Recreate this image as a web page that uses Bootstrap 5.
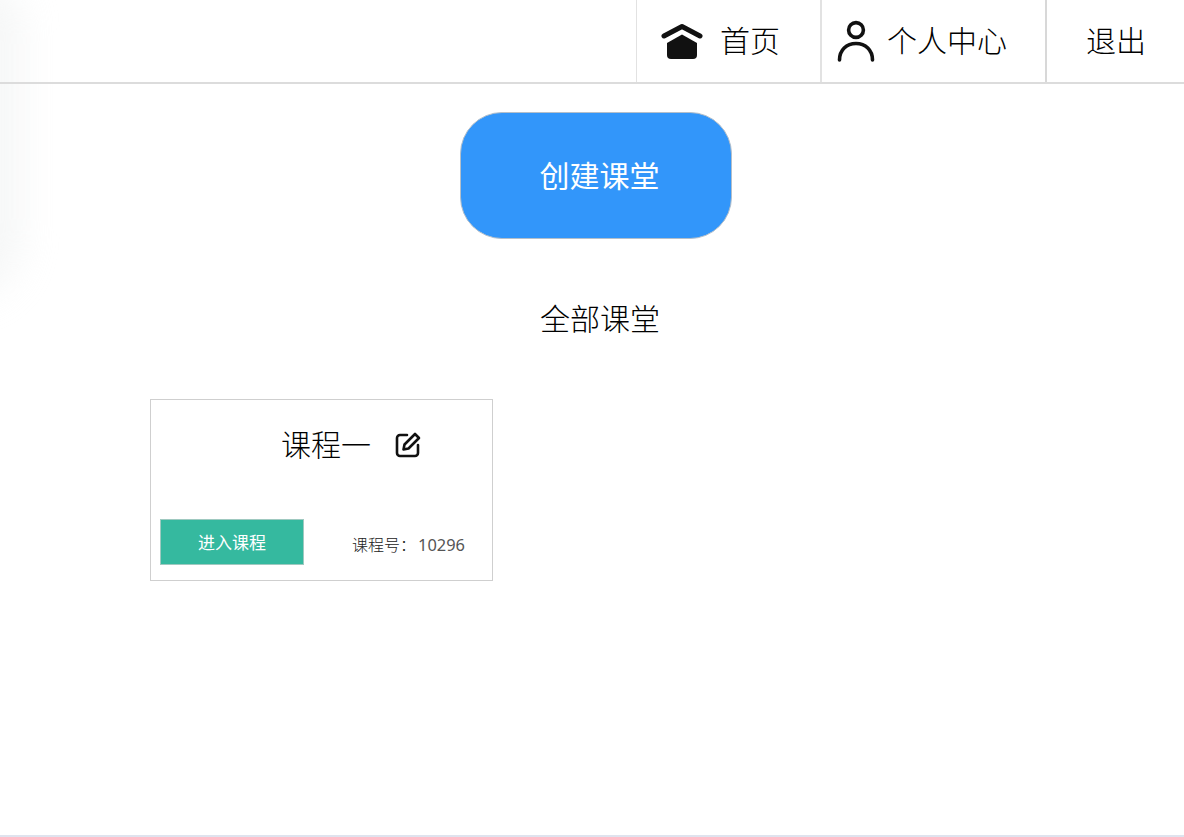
<!DOCTYPE html>
<html lang="zh-CN">
<head>
<meta charset="utf-8">
<title>全部课堂</title>
<link href="https://cdn.jsdelivr.net/npm/bootstrap@5.3.0/dist/css/bootstrap.min.css" rel="stylesheet">
<style>
html,body{height:837px;overflow:hidden;background:#fff}
body{font-family:"Noto Sans","Noto Sans CJK SC",sans-serif;font-weight:300;color:#000;position:relative}
.page-glow{position:absolute;left:-40px;top:-20px;width:62px;height:320px;background:#e9ecec;filter:blur(18px);opacity:.4;pointer-events:none;border-radius:0 40px 60px 0}
.top-bar{height:84px;border-bottom:2px solid #dcdcdc;position:relative;background:transparent}
.top-item{height:82px;font-size:30px;line-height:82px;color:#000;text-decoration:none;border-left:2px solid #e2e2e2}
.top-home{width:184px;padding-left:24px;border-left-width:1px}
.top-home svg{margin-right:17px}
.top-user{width:225px;padding-left:15px}
.top-user svg{margin-right:12px}
.top-exit{width:139px;padding-left:39px;border-left-color:#d8d8d8}
.main-area{position:relative;height:753px;border-bottom:2px solid #dfe3ee}
.create-wrap{padding-top:28px;padding-left:460px}
.create-btn{width:272px;height:127px;background:#3296fa;border:1px solid #b4bfca;border-radius:42px;color:#fff;font-size:30px;font-weight:400;padding:0 0 0 7px;line-height:1}
.create-btn:hover,.create-btn:active{background:#3296fa!important;color:#fff!important}
.section-title{font-size:30px;line-height:40px;margin:60px 0 0;text-align:center;padding-left:16px;font-weight:300;color:#000}
.course-box{width:343px;height:182px;margin:60px 0 0 150px;border:1px solid #cfcfcf;border-radius:0;padding:0;color:#000}
.course-head{height:119px;padding:23px 0 0 130px;font-size:30px;line-height:44px}
.course-head svg{margin-left:24px;vertical-align:-2px}
.course-foot{padding-left:9px}
.enter-btn{width:144px;height:46px;background:#35b99f;border:1px solid #9fc9c0;border-radius:0;color:#fff;font-size:17px;font-weight:400;line-height:1;padding:0}
.enter-btn:hover,.enter-btn:active{background:#35b99f!important;color:#fff!important}
.course-no{font-size:16px;font-weight:300;color:#222;margin-left:48px;padding-top:14px;line-height:24px;white-space:nowrap}
.course-num{font-size:16.400px;margin-left:2px;font-weight:400;color:#555}
</style>
</head>
<body>
<div class="page-glow"></div>
<nav class="top-bar d-flex justify-content-end">
  <a class="top-item top-home d-flex align-items-center" href="#">
    <svg width="42" height="36" viewBox="0 0 42 36" fill="#111" aria-hidden="true"><path d="M3 13 21 3.500 39 13" fill="none" stroke="#111" stroke-width="5" stroke-linecap="round" stroke-linejoin="round"/><path d="M6 20 21 11.500 36 20v12a4 4 0 0 1-4 4H10a4 4 0 0 1-4-4z"/></svg>
    <span>首页</span>
  </a>
  <a class="top-item top-user d-flex align-items-center" href="#">
    <svg width="38" height="42" viewBox="0 0 38 42" fill="none" stroke="#111" stroke-width="3.600" stroke-linecap="round" aria-hidden="true"><circle cx="19" cy="10" r="7.400"/><path d="M2.500 40c0-10 7-16.500 16.500-16.500S35.500 30 35.500 40"/></svg>
    <span>个人中心</span>
  </a>
  <a class="top-item top-exit" href="#">退出</a>
</nav>
<main class="main-area">
  <div class="create-wrap">
    <button type="button" class="btn create-btn">创建课堂</button>
  </div>
  <h2 class="section-title">全部课堂</h2>
  <div class="card course-box">
    <div class="course-head">课程一<svg width="26" height="26" viewBox="0 0 26 26" fill="none" stroke="#111" stroke-width="2.600" stroke-linecap="round" stroke-linejoin="round" aria-hidden="true"><path d="M12 3H5a3 3 0 0 0-3 3v15a3 3 0 0 0 3 3h15a3 3 0 0 0 3-3v-8"/><path d="M20 2 24 6 13.500 16.500 8.500 17.500 9.500 12.500z"/></svg></div>
    <div class="course-foot d-flex">
      <button type="button" class="btn enter-btn">进入课程</button>
      <div class="course-no">课程号：<span class="course-num">10296</span></div>
    </div>
  </div>
</main>
</body>
</html>
